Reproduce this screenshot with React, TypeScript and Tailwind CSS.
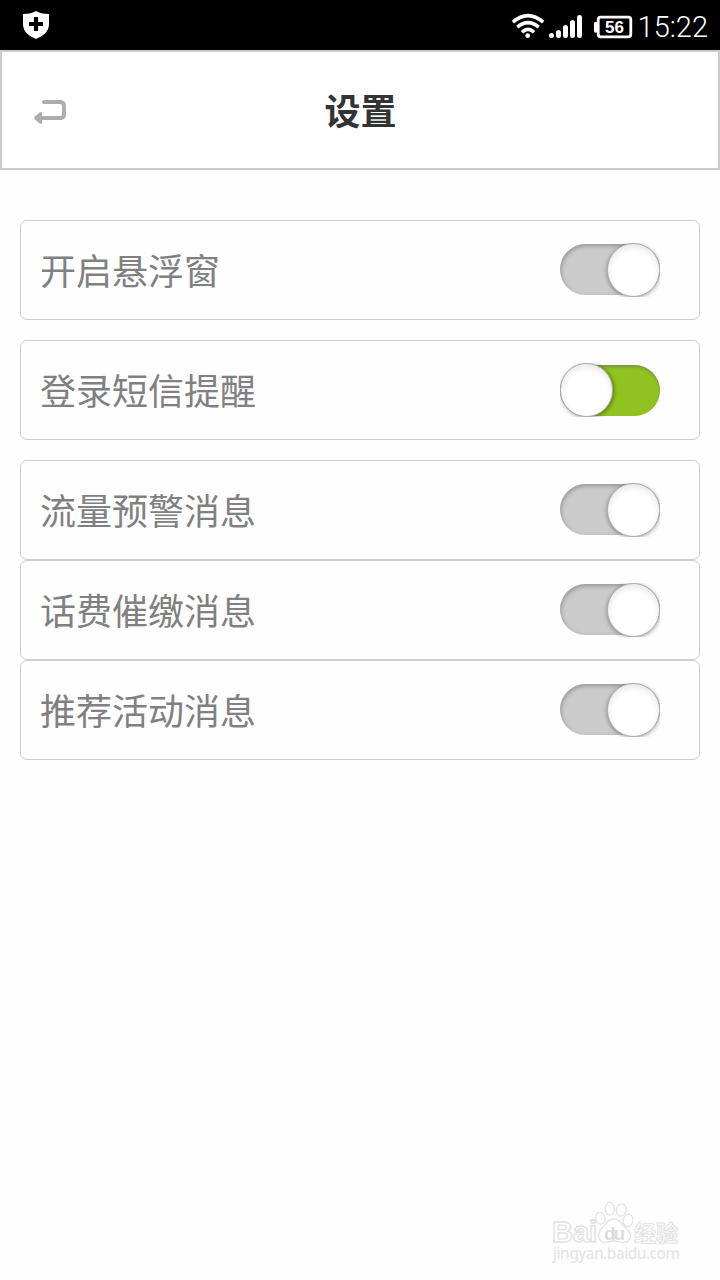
type Setting = { label: string; green?: boolean };

const groups: Setting[][] = [
  [{ label: '开启悬浮窗' }],
  [{ label: '登录短信提醒', green: true }],
  [{ label: '流量预警消息' }, { label: '话费催缴消息' }, { label: '推荐活动消息' }],
];

function Toggle({ green }: { green?: boolean }) {
  return (
    <span
      role="switch"
      aria-checked={!!green}
      className={`relative flex h-[54px] w-[100px] overflow-hidden ${green ? 'pt-[2px]' : 'pt-px'}`}
    >
      <span
        className={`h-[51px] w-[100px] rounded-full ${
          green
            ? 'bg-[#90c31f] shadow-[inset_0_2px_3px_rgba(110,120,100,0.6)]'
            : 'bg-[#cbcbcb] shadow-[inset_1px_2px_4px_rgba(110,110,110,0.55)]'
        }`}
      />
      <span
        className={`absolute top-0 h-[54px] w-[53px] rounded-full border border-[#a9a9a9] bg-white ${
          green
            ? 'left-0 shadow-[inset_0_3px_6px_rgba(0,0,0,0.1),1px_1px_4px_rgba(0,0,0,0.4)]'
            : 'right-0 shadow-[inset_0_3px_6px_rgba(0,0,0,0.1),0_1px_4px_rgba(0,0,0,0.35)]'
        }`}
      />
    </span>
  );
}

function StatusBar() {
  return (
    <div className="flex h-[50px] items-center bg-black text-white">
      <svg className="ml-[22px] h-[30px] w-[28px]" viewBox="0 0 28 30" fill="white">
        <path d="M14 1C17 3 21 4 27 4V14C27 22 21 26 14 29C7 26 1 22 1 14V4C7 4 11 3 14 1Z" />
        <path d="M14 7v14M7 14h14" stroke="black" strokeWidth="4.2" />
      </svg>
      <svg className="ml-auto h-[50px] w-[136px]" viewBox="500 0 136 50" fill="none" stroke="white">
        <g strokeWidth="3.6">
          <path d="M512.8 22.2Q528 9.2 543.2 22.2" />
          <path d="M517.3 27.2Q528 18 538.7 27.2" />
          <path d="M522 32.2Q528 26.5 534 32.2" />
        </g>
        <circle cx="527.7" cy="35.7" r="2.4" fill="white" stroke="none" />
        <g strokeWidth="5" strokeLinecap="round">
          <path d="M551.5 35.4v.2M558.5 32.5v3M565.5 27.5v8M572.5 22.5v13M579.5 17.5v18" />
        </g>
        <rect x="598.2" y="17.2" width="32.6" height="19.6" rx="2.5" strokeWidth="2.8" />
        <path d="M595.7 23.5v7.5" strokeWidth="3.5" strokeLinecap="round" />
        <text
          x="614.5"
          y="33"
          textAnchor="middle"
          fill="white"
          stroke="none"
          className="font-['Liberation_Sans',sans-serif] text-[17px] font-bold"
        >
          56
        </text>
      </svg>
      <span className="mt-[4px] mr-[12px] w-[72px] text-right font-[Roboto,sans-serif] text-[29px] leading-none font-light whitespace-nowrap">
        15:22
      </span>
    </div>
  );
}

function Watermark() {
  return (
    <svg
      className="absolute right-[36px] bottom-[10px] h-[72px] w-[136px]"
      viewBox="548 1198 136 72"
      fill="white"
      stroke="#e2e2e2"
      strokeWidth="1.3"
    >
      <text x="552" y="1242" textLength="45" className="font-['Liberation_Sans',sans-serif] text-[29px] font-bold">
        Bai
      </text>
      <ellipse cx="600.4" cy="1218.3" rx="4.6" ry="6" transform="rotate(-12 600.4 1218.3)" />
      <ellipse cx="609.8" cy="1208.8" rx="4.7" ry="6.4" />
      <ellipse cx="621.2" cy="1210" rx="4.9" ry="6.2" transform="rotate(12 621.2 1210)" />
      <ellipse cx="628" cy="1220.6" rx="4.8" ry="6.2" transform="rotate(15 628 1220.6)" />
      <path d="M614 1219C620 1219 622 1225 626 1228C631 1232 632 1237 629 1240C625 1245 620 1241 614 1241C608 1241 603 1245 600 1240C597 1235 599 1231 603 1227C607 1223 608 1219 614 1219Z" />
      <text
        x="604"
        y="1240"
        textLength="21"
        fill="#dcdcdc"
        stroke="none"
        className="font-['Liberation_Sans',sans-serif] text-[19px] font-bold"
      >
        du
      </text>
      <text
        x="634"
        y="1241"
        strokeWidth="1"
        className="font-['Noto_Sans_CJK_SC',sans-serif] text-[22px] font-bold"
      >
        经验
      </text>
      <text
        x="553"
        y="1259"
        textLength="127"
        fill="#e2e2e2"
        stroke="none"
        className="font-['Noto_Sans',sans-serif] text-[15.5px]"
      >
        jingyan.baidu.com
      </text>
    </svg>
  );
}

export default function App() {
  return (
    <div className="relative flex h-[1280px] w-[720px] flex-col overflow-hidden bg-[#fefefe] font-['Noto_Sans_CJK_SC',sans-serif]">
      <StatusBar />
      <header className="grid h-[120px] grid-cols-[100px_1fr_100px] items-center border-2 border-[#cbcbcb] bg-white">
        <svg className="mt-[3px] ml-[31px] h-[28px] w-[36px]" viewBox="33 97 36 28" fill="none">
          <path
            d="M44 101H60Q64 101 64 105V113Q64 117 60 117H41"
            stroke="#adadad"
            strokeWidth="4"
            strokeLinecap="round"
          />
          <path d="M35.5 117L40.5 112.5V121.5Z" fill="#adadad" stroke="#adadad" strokeWidth="3" strokeLinejoin="round" />
        </svg>
        <h1 className="pb-[2px] pl-px text-center text-[36px] leading-[52px] font-bold text-[#333]">设置</h1>
      </header>
      <main className="flex flex-col gap-5 px-5 pt-[50px]">
        {groups.map((group) => (
          <section key={group[0].label}>
            {group.map(({ label, green }) => (
              <div
                key={label}
                className="flex h-[100px] items-center justify-between rounded-[7px] border border-[#cecece] bg-[#fefefe] pr-[39px] pl-[19px]"
              >
                <span className="pb-[2px] text-[36px] leading-[52px] text-[#808080]">{label}</span>
                <Toggle green={green} />
              </div>
            ))}
          </section>
        ))}
      </main>
      <Watermark />
    </div>
  );
}
